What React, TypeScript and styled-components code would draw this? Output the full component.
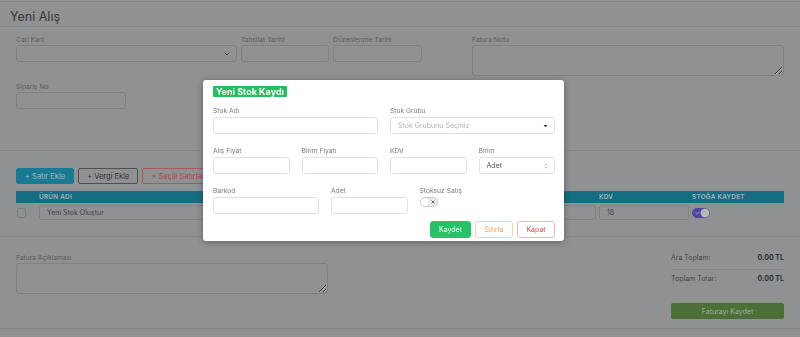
import React from "react";
import styled, { createGlobalStyle } from "styled-components";

const GlobalStyle = createGlobalStyle`
  html, body { margin: 0; padding: 0; }
  body {
    width: 800px;
    height: 337px;
    overflow: hidden;
    background: #c4c6c7;
    font-family: Inter, "Open Sans", "DejaVu Sans", sans-serif;
    color: #4d4e51;
  }
  * { box-sizing: border-box; }
`;

const Page = styled.div`
  padding-top: 1px;
`;

const Card = styled.div`
  border-top: 1px solid #b5b8b9;
`;

const CardHeader = styled.h1`
  margin: 0;
  height: 25px;
  display: flex;
  align-items: center;
  padding: 5px 0 0 10px;
  font-size: 12.5px;
  font-weight: 400;
  color: #46474a;
  border-bottom: 1px solid #b5b8b9;
`;

const Section = styled.div<{ $pt: number; $pb: number }>`
  padding: ${(p) => p.$pt}px 16px ${(p) => p.$pb}px;
  border-bottom: 1px solid #b5b8b9;
`;

const FormRow = styled.div<{ $mt?: number }>`
  display: flex;
  gap: 4px;
  margin-top: ${(p) => p.$mt ?? 0}px;
`;

const Field = styled.div<{ $w: number; $push?: boolean }>`
  display: flex;
  flex-direction: column;
  width: ${(p) => p.$w}px;
  margin-left: ${(p) => (p.$push ? "auto" : "0")};
`;

const Label = styled.label`
  font-size: 6.7px;
  line-height: 8px;
  margin-bottom: 1px;
  color: #7c7e80;
  white-space: nowrap;
`;

const PageInput = styled.input<{ $h?: number }>`
  height: ${(p) => p.$h ?? 17}px;
  border: 1px solid #aeb1b3;
  border-radius: 3px;
  background: transparent;
  font-family: inherit;
  font-size: 7px;
  padding: 0 7px;
  color: #56585a;
  outline: none;
`;

const PageSelect = styled.div`
  height: 17px;
  border: 1px solid #aeb1b3;
  border-radius: 3px;
  display: flex;
  align-items: center;
  justify-content: flex-end;
  padding-right: 6px;
  color: #5a5c5e;
`;

const PageTextarea = styled.textarea<{ $h: number }>`
  height: ${(p) => p.$h}px;
  border: 1px solid #aeb1b3;
  border-radius: 3px;
  background: transparent;
  resize: vertical;
  outline: none;
`;

const Toolbar = styled.div`
  display: flex;
  gap: 4px;
`;

const ToolButton = styled.button<{ $kind: "fill" | "dark" | "red" }>`
  height: 16px;
  padding: 0 8px;
  border-radius: 2px;
  font-family: inherit;
  font-size: 7.5px;
  white-space: nowrap;
  display: flex;
  align-items: center;
  gap: 2px;
  background: ${(p) => (p.$kind === "fill" ? "#1aa6c8" : "transparent")};
  color: ${(p) =>
    p.$kind === "fill" ? "#e2f2f6" : p.$kind === "dark" ? "#3e4041" : "#f05a64"};
  border: 1px solid
    ${(p) =>
      p.$kind === "fill" ? "#1aa6c8" : p.$kind === "dark" ? "#646768" : "#f0707a"};
`;

const cols = "20px 301px 124px 126px 90px 1fr";

const TableHead = styled.div`
  margin-top: 7px;
  height: 12px;
  display: grid;
  grid-template-columns: ${cols};
  column-gap: 3px;
  align-items: center;
  background: #1594ae;
  color: #e6f2f5;
  font-size: 6.3px;
  font-weight: 600;
  letter-spacing: 0.3px;
`;

const TableRow = styled.div`
  display: grid;
  grid-template-columns: ${cols};
  column-gap: 3px;
  align-items: center;
  padding-top: 2px;
`;

const CheckBox = styled.span`
  width: 9px;
  height: 10px;
  margin-left: 1px;
  border: 1px solid #a8abad;
  border-radius: 2px;
`;

const Switch = styled.span<{ $on: boolean }>`
  position: relative;
  width: 18px;
  height: 10px;
  border-radius: 5px;
  background: ${(p) => (p.$on ? "#6558d8" : "#ececec")};
  border: 1px solid ${(p) => (p.$on ? "#6558d8" : "#cfcfcf")};
  display: flex;
  align-items: center;
  justify-content: ${(p) => (p.$on ? "flex-start" : "flex-end")};
  padding: 0 2px;
`;

const Knob = styled.span<{ $on: boolean }>`
  position: absolute;
  top: 0;
  ${(p) => (p.$on ? "right: 0;" : "left: 0;")}
  width: 8px;
  height: 8px;
  border-radius: 50%;
  background: #fff;
  box-shadow: 0 0 0 0.5px #c8c8c8;
`;

const Bottom = styled.div`
  display: flex;
  justify-content: space-between;
  align-items: flex-start;
`;

const Totals = styled.div`
  width: 113px;
  display: flex;
  flex-direction: column;
`;

const TotalRow = styled.div<{ $line?: boolean }>`
  display: flex;
  justify-content: space-between;
  font-size: 7px;
  line-height: 8px;
  color: #5e6062;
  padding: ${(p) => (p.$line ? "0 0 7px" : "5px 0 0")};
  border-bottom: ${(p) => (p.$line ? "1px solid #b5b8b9" : "none")};
  b { color: #3b3d3f; font-weight: 700; }
`;

const SaveInvoice = styled.button`
  margin-top: 20px;
  height: 16px;
  border: none;
  border-radius: 2px;
  background: #659644;
  color: #dfe9d8;
  font-family: inherit;
  font-size: 7px;
`;

/* modal */

const Overlay = styled.div`
  position: fixed;
  inset: 0;
  background: rgba(20, 24, 28, 0.3);
  padding: 80px 0 0 203px;
`;

const Modal = styled.div`
  width: 361px;
  height: 161px;
  background: #fff;
  border-radius: 3px;
  box-shadow: 0 1px 6px rgba(0, 0, 0, 0.35);
  padding: 6px 9px 0 10px;
`;

const ModalTitle = styled.div`
  display: flex;
  line-height: 11px;
`;

const Badge = styled.span`
  background: #22c15e;
  color: #fff;
  font-size: 9px;
  font-weight: 700;
  line-height: 11px;
  padding: 0 3px;
  border-radius: 1px;
`;

const ModalGrid = styled.div`
  display: grid;
  grid-template-columns: repeat(12, 1fr);
  column-gap: 12px;
  row-gap: 13px;
  margin-top: 10px;
`;

const Cell = styled.div<{ $span: number }>`
  grid-column: span ${(p) => p.$span};
  display: flex;
  flex-direction: column;
  align-items: stretch;
`;

const MLabel = styled.label`
  font-size: 6.7px;
  line-height: 8px;
  margin-bottom: 2px;
  color: #7a7a7a;
`;

const MInput = styled.input`
  height: 17px;
  border: 1px solid #e2e2e2;
  border-radius: 3px;
  outline: none;
  font-family: inherit;
  font-size: 7px;
`;

const MSelect = styled.div`
  height: 17px;
  border: 1px solid #e2e2e2;
  border-radius: 3px;
  display: flex;
  align-items: center;
  justify-content: space-between;
  padding: 0 6px 0 7px;
  font-size: 7px;
`;

const Placeholder = styled.span<{ $muted?: boolean }>`
  color: ${(p) => (p.$muted ? "#b3b3b3" : "#555")};
`;

const ToggleWrap = styled.div`
  display: flex;
`;

const ModalActions = styled.div`
  display: flex;
  justify-content: flex-end;
  gap: 4px;
  margin-top: 7px;
`;

const MButton = styled.button<{ $kind: "ok" | "warn" | "close" }>`
  width: ${(p) => (p.$kind === "ok" ? 41 : 38)}px;
  height: 17px;
  border-radius: 3px;
  font-family: inherit;
  font-size: 7px;
  padding: 0;
  background: ${(p) => (p.$kind === "ok" ? "#26c266" : "#fff")};
  color: ${(p) =>
    p.$kind === "ok" ? "#fff" : p.$kind === "warn" ? "#f4a24c" : "#e4505c"};
  border: 1px solid
    ${(p) =>
      p.$kind === "ok" ? "#26c266" : p.$kind === "warn" ? "#ffd3a6" : "#f3b4b8"};
`;

function Chevron() {
  return (
    <svg width="6" height="4" viewBox="0 0 6 4">
      <path d="M0.8 0.8 L3 3 L5.2 0.8" fill="none" stroke="currentColor" strokeWidth="0.9" />
    </svg>
  );
}

function Caret() {
  return (
    <svg width="5" height="4" viewBox="0 0 5 4">
      <path d="M0.5 1 L4.5 1 L2.5 3.3 Z" fill="#333" />
    </svg>
  );
}

function UpDown() {
  return (
    <svg width="4" height="6" viewBox="0 0 4 6">
      <path d="M0.6 2.2 L2 0.8 L3.4 2.2 M0.6 3.8 L2 5.2 L3.4 3.8" fill="none" stroke="#999" strokeWidth="0.7" />
    </svg>
  );
}

export default function App() {
  return (
    <>
      <GlobalStyle />
      <Page>
        <Card>
          <CardHeader>Yeni Alış</CardHeader>

          <Section $pt={9} $pb={41}>
            <FormRow>
              <Field $w={221}>
                <Label>Cari Kart</Label>
                <PageSelect>
                  <Chevron />
                </PageSelect>
              </Field>
              <Field $w={88}>
                <Label>Tahsilat Tarihi</Label>
                <PageInput />
              </Field>
              <Field $w={89}>
                <Label>Düzenlenme Tarihi</Label>
                <PageInput />
              </Field>
              <Field $w={312} $push>
                <Label>Fatura Notu</Label>
                <PageTextarea $h={31} />
              </Field>
            </FormRow>
            <FormRow $mt={7}>
              <Field $w={110}>
                <Label>Sipariş No</Label>
                <PageInput />
              </Field>
            </FormRow>
          </Section>

          <Section $pt={17} $pb={16}>
            <Toolbar>
              <ToolButton $kind="fill">+ Satır Ekle</ToolButton>
              <ToolButton $kind="dark">+ Vergi Ekle</ToolButton>
              <ToolButton $kind="red">× Seçili Satırları Sil</ToolButton>
            </Toolbar>
            <TableHead>
              <span />
              <span>ÜRÜN ADI</span>
              <span>MİKTAR</span>
              <span>BİRİM FİYAT</span>
              <span>KDV</span>
              <span>STOĞA KAYDET</span>
            </TableHead>
            <TableRow>
              <CheckBox />
              <PageInput $h={15} defaultValue="Yeni Stok Oluştur" />
              <PageInput $h={15} />
              <PageInput $h={15} />
              <PageInput $h={15} defaultValue="18" />
              <Switch $on>
                <svg width="5" height="4" viewBox="0 0 5 4">
                  <path d="M0.5 2 L1.9 3.3 L4.5 0.7" fill="none" stroke="#fff" strokeWidth="0.8" />
                </svg>
                <Knob $on />
              </Switch>
            </TableRow>
          </Section>

          <Section $pt={17} $pb={9}>
            <Bottom>
              <Field $w={312}>
                <Label>Fatura Açıklaması</Label>
                <PageTextarea $h={31} />
              </Field>
              <Totals>
                <TotalRow $line>
                  <span>Ara Toplam:</span>
                  <b>0.00 TL</b>
                </TotalRow>
                <TotalRow>
                  <span>Toplam Tutar:</span>
                  <b>0.00 TL</b>
                </TotalRow>
                <SaveInvoice>Faturayı Kaydet</SaveInvoice>
              </Totals>
            </Bottom>
          </Section>
        </Card>
      </Page>

      <Overlay>
        <Modal>
          <ModalTitle>
            <Badge>Yeni Stok Kaydı</Badge>
          </ModalTitle>
          <ModalGrid>
            <Cell $span={6}>
              <MLabel>Stok Adı</MLabel>
              <MInput />
            </Cell>
            <Cell $span={6}>
              <MLabel>Stok Grubu</MLabel>
              <MSelect>
                <Placeholder $muted>Stok Grubunu Seçiniz</Placeholder>
                <Caret />
              </MSelect>
            </Cell>
            <Cell $span={3}>
              <MLabel>Alış Fiyat</MLabel>
              <MInput />
            </Cell>
            <Cell $span={3}>
              <MLabel>Birim Fiyatı</MLabel>
              <MInput />
            </Cell>
            <Cell $span={3}>
              <MLabel>KDV</MLabel>
              <MInput />
            </Cell>
            <Cell $span={3}>
              <MLabel>Birim</MLabel>
              <MSelect>
                <Placeholder>Adet</Placeholder>
                <UpDown />
              </MSelect>
            </Cell>
            <Cell $span={4}>
              <MLabel>Barkod</MLabel>
              <MInput />
            </Cell>
            <Cell $span={3}>
              <MLabel>Adet</MLabel>
              <MInput />
            </Cell>
            <Cell $span={3}>
              <MLabel>Stoksuz Satış</MLabel>
              <ToggleWrap>
                <Switch $on={false}>
                  <svg width="4" height="4" viewBox="0 0 4 4">
                    <path d="M0.6 0.6 L3.4 3.4 M3.4 0.6 L0.6 3.4" stroke="#444" strokeWidth="0.8" />
                  </svg>
                  <Knob $on={false} />
                </Switch>
              </ToggleWrap>
            </Cell>
          </ModalGrid>
          <ModalActions>
            <MButton $kind="ok">Kaydet</MButton>
            <MButton $kind="warn">Sıfırla</MButton>
            <MButton $kind="close">Kapat</MButton>
          </ModalActions>
        </Modal>
      </Overlay>
    </>
  );
}
